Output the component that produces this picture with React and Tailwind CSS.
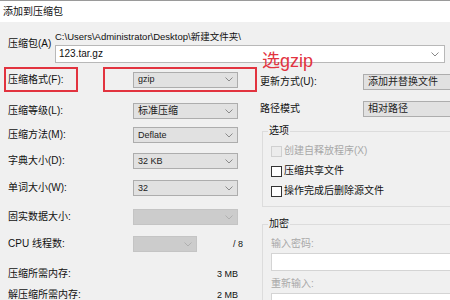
const font = "font-['Liberation_Sans','Noto_Sans_CJK_SC',sans-serif]";

const Chevron = ({ color = "#888" }) => (
  <svg width="8" height="5" viewBox="0 0 8 5" fill="none">
    <path d="M0.5 0.5 L4 4 L7.5 0.5" stroke={color} strokeWidth="1" />
  </svg>
);

const Select = ({ value, width = "w-[105px]", disabled = false, cjk = false }) => (
  <div
    className={`${width} h-[16px] flex items-center justify-between pl-[4px] pr-[4px] border ${
      disabled ? "bg-[#cccccc] border-[#c4c4c4]" : "bg-[#e1e1e1] border-[#adadad]"
    }`}
  >
    <span className={`${cjk ? "text-[10px]" : "text-[9px]"} leading-none text-[#222]`}>{value}</span>
    <Chevron color={disabled ? "#b0b0b0" : "#8a8a8a"} />
  </div>
);

const Row = ({ label, className, children }) => (
  <div className={`flex items-center ${className}`}>
    <div className="w-[133px] pl-[8px] text-[10px] leading-none text-[#111]">{label}</div>
    {children}
  </div>
);

const Check = ({ label, disabled = false }) => (
  <div className="flex items-center h-[20px] gap-[2px]">
    <div
      className={`w-[11px] h-[11px] border ${
        disabled ? "border-[#d0d0d0] bg-[#ececec]" : "border-[#333] bg-white"
      }`}
    />
    <span className={`text-[10px] leading-none ${disabled ? "text-[#a8a8a8]" : "text-[#111]"}`}>
      {label}
    </span>
  </div>
);

export default function App() {
  return (
    <div className={`relative w-[450px] h-[300px] overflow-hidden bg-[#f0f0f0] ${font}`}>
      {/* title bar */}
      <div className="h-[22px] bg-white border-t border-[#9a9a9a] flex items-center pl-[3px] text-[10px] text-[#111]">
        添加到压缩包
      </div>

      {/* archive name */}
      <div className="flex h-[45px]">
        <div className="w-[55px] pl-[8px] pt-[17px] text-[10px] leading-none text-[#111]">压缩包(A)</div>
        <div className="flex-1 flex flex-col">
          <div className="mt-[10px] h-[12px] text-[9.5px] leading-none text-[#111]">
            C:\Users\Administrator\Desktop\新建文件夹\
          </div>
          <div className="mt-[1px] h-[18px] w-[390px] bg-white border border-[#b8b8b8] flex items-center justify-between pl-[3px] pr-[5px]">
            <span className="text-[10px] leading-none text-[#111]">123.tar.gz</span>
            <Chevron />
          </div>
        </div>
      </div>

      <div className="flex">
        {/* left column */}
        <div className="w-[262px] flex flex-col">
          <div className="flex h-[25px]">
            <div className="ml-[4px] w-[74px] border-2 border-[#e2333f] flex items-center pl-[2px] text-[10px] leading-none text-[#111]">
              压缩格式(F):
            </div>
            <div className="ml-[25px] w-[154px] border-2 border-[#e2333f] flex items-center pl-[28px]">
              <Select value="gzip" />
            </div>
          </div>
          <Row label="压缩等级(L):" className="mt-[7px] h-[24px]">
            <Select value="标准压缩" cjk />
          </Row>
          <Row label="压缩方法(M):" className="h-[24px]">
            <Select value="Deflate" />
          </Row>
          <Row label="字典大小(D):" className="mt-[2px] h-[24px]">
            <Select value="32 KB" />
          </Row>
          <Row label="单词大小(W):" className="mt-[3px] h-[24px]">
            <Select value="32" />
          </Row>
          <Row label="固实数据大小:" className="mt-[5px] h-[24px]">
            <Select value="" disabled />
          </Row>
          <Row label="CPU 线程数:" className="mt-[3px] h-[24px]">
            <Select value="" width="w-[64px]" disabled />
            <span className="ml-[36px] text-[9px] leading-none text-[#111]">/ 8</span>
          </Row>
          <div className="mt-[6px] h-[24px] flex items-center justify-between pl-[8px] w-[238px] text-[10px] leading-none text-[#111]">
            <span>压缩所需内存:</span>
            <span className="text-[9px]">3 MB</span>
          </div>
          <div className="h-[18px] flex items-center justify-between pl-[8px] w-[238px] text-[10px] leading-none text-[#111]">
            <span>解压缩所需内存:</span>
            <span className="text-[9px]">2 MB</span>
          </div>
        </div>

        {/* right column */}
        <div className="flex-1 flex flex-col">
          <div className="mt-[6px] h-[17px] flex items-center">
            <div className="w-[106px] pl-[3px] text-[10px] leading-none text-[#111]">更新方式(U):</div>
            <Select value="添加并替换文件" width="w-[100px]" cjk />
          </div>
          <div className="mt-[10px] h-[17px] flex items-center">
            <div className="w-[106px] pl-[3px] text-[10px] leading-none text-[#111]">路径模式</div>
            <Select value="相对路径" width="w-[100px]" cjk />
          </div>

          <fieldset className="mt-[7px] ml-[5px] w-[200px] border border-[#dcdcdc] pl-[8px] pt-[3px] pb-[5px]">
            <legend className="-ml-[3px] px-[1px] text-[10px] leading-[14px] text-[#111]">选项</legend>
            <Check label="创建自释放程序(X)" disabled />
            <Check label="压缩共享文件" />
            <Check label="操作完成后删除源文件" />
          </fieldset>

          <fieldset className="mt-[10px] ml-[5px] w-[200px] border border-[#dcdcdc] pl-[8px] pt-[8px] pb-[5px]">
            <legend className="-ml-[3px] px-[1px] text-[10px] leading-[14px] text-[#111]">加密</legend>
            <div className="text-[10px] leading-none text-[#a8a8a8]">输入密码:</div>
            <div className="mt-[4px] h-[18px] w-[200px] bg-white border border-[#d4d4d4]" />
            <div className="mt-[8px] text-[10px] leading-none text-[#a8a8a8]">重新输入:</div>
            <div className="mt-[4px] h-[18px] w-[200px] bg-white border border-[#d4d4d4]" />
          </fieldset>
        </div>
      </div>

      {/* annotation */}
      <div className="absolute left-[262px] top-[52px] text-[18px] leading-none text-[#e2333f]">选gzip</div>
    </div>
  );
}
